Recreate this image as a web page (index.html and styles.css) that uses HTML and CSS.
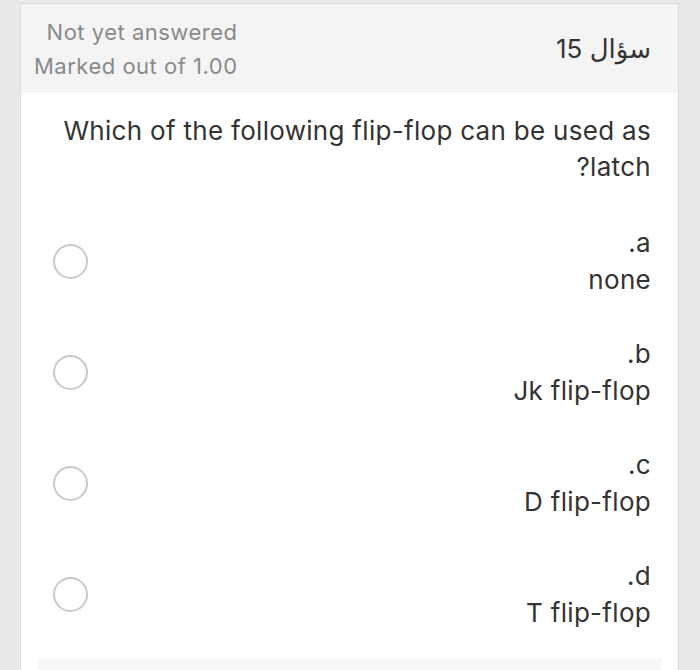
FILE: index.html
```html
<!DOCTYPE html>
<html lang="ar" dir="rtl">
<head>
<meta charset="utf-8">
<link rel="stylesheet" href="styles.css">
</head>
<body>
<div class="card">
  <div class="header">
    <h3 class="qno">سؤال 15</h3>
    <div class="info">
      <div class="state">Not yet answered</div>
      <div class="grade">Marked out of 1.00</div>
    </div>
  </div>
  <div class="content">
    <div class="qtext">Which of the following flip-flop can be used as latch?</div>
    <div class="answers">
      <div class="option">
        <div class="label"><div>a.</div><div>none</div></div>
        <span class="radio"></span>
      </div>
      <div class="option">
        <div class="label"><div>b.</div><div>Jk flip-flop</div></div>
        <span class="radio"></span>
      </div>
      <div class="option">
        <div class="label"><div>c.</div><div>D flip-flop</div></div>
        <span class="radio"></span>
      </div>
      <div class="option">
        <div class="label"><div>d.</div><div>T flip-flop</div></div>
        <span class="radio"></span>
      </div>
    </div>
    <div class="footer-box"></div>
  </div>
</div>
</body>
</html>
```
FILE: styles.css
```css
html, body {
  margin: 0;
  padding: 0;
  background: #e9e9e9;
  height: 670px;
  overflow: hidden;
}
body {
  font-family: Inter, "DejaVu Sans", Arial, sans-serif;
  color: #333;
}
.card {
  margin: 3px 21px 0 20px;
  background: #fff;
  border: 1px solid #dcdcdc;
  border-bottom: none;
  height: 667px;
  box-sizing: border-box;
}
.header {
  background: #f4f4f4;
  height: 89px;
  display: flex;
  align-items: center;
  justify-content: space-between;
  padding: 0 27px 0 13px;
}
.qno {
  margin: 0;
  font-weight: normal;
  font-size: 26px;
  color: #333;
  letter-spacing: 0.5px;
}
.info {
  text-align: right;
  font-size: 22px;
  line-height: 34px;
  color: #8a8a8a;
  letter-spacing: 0.5px;
}
.content {
  padding: 20px 27px 0 14px;
}
.qtext {
  font-size: 26px;
  line-height: 36px;
  padding-left: 20px;
  letter-spacing: 0.3px;
}
.answers {
  margin-top: 39px;
  display: flex;
  flex-direction: column;
  gap: 37px;
}
.option {
  display: flex;
  align-items: center;
  justify-content: space-between;
}
.label {
  font-size: 26px;
  line-height: 37px;
  text-align: right;
  letter-spacing: 0.3px;
}
.radio {
  width: 31px;
  height: 31px;
  border: 2px solid #c9c9c9;
  border-radius: 50%;
  margin-left: 18px;
  background: #fff;
}
.footer-box {
  margin-top: 27px;
  margin-left: 3px;
  margin-right: -11px;
  height: 30px;
  background: #f7f7f7;
}
```
